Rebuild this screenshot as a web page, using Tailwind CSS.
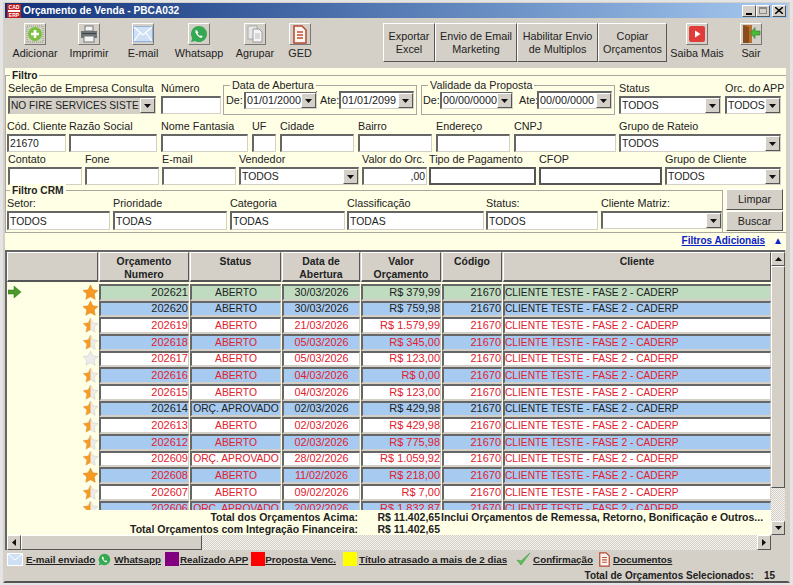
<!DOCTYPE html>
<html lang="pt-BR">
<head>
<meta charset="UTF-8" />
<title>Orçamento de Venda - PBCA032</title>
<script src="https://cdn.jsdelivr.net/npm/@tailwindcss/browser@4"></script>
</head>
<body class="bg-[#e4e4e4] h-[585px] w-[793px] overflow-hidden font-['Liberation_Sans',Arial,sans-serif] text-[10.8px] leading-[13px] text-[#222]">
<div id="app"></div>
<script>
// sunken win32 edges
const SUNKEN = "border-t-2 border-l-2 border-b border-r border-t-[#666] border-l-[#666] border-b-[#d4d0c8] border-r-[#d4d0c8]";
const RAISED = "border border-t-white border-l-white border-b-[#555] border-r-[#555]";

const ARROW_BTN = `<span class="w-[15px] shrink-0 self-stretch bg-[#d4d0c8] ${RAISED} flex items-center justify-center"><svg width="7" height="4" viewBox="0 0 7 4"><path d="M0 0h7L3.5 4z" fill="#111"/></svg></span>`;

function input(w, value = "", extra = "bg-white") {
    return `<div class="${w} h-[18px] ${SUNKEN} ${extra} flex items-center px-px overflow-hidden whitespace-nowrap text-[10.4px]">${value}</div>`;
}
function combo(w, value, bg = "bg-white", size = "text-[10.4px]") {
    return `<div class="${w} h-[18px] ${SUNKEN} ${bg} flex items-center pl-px overflow-hidden whitespace-nowrap ${size}"><span class="grow overflow-hidden">${value}</span>${ARROW_BTN}</div>`;
}
function field(label, ml, control, w) {
    return `<div class="${ml} ${w} shrink-0"><div class="h-[14px] whitespace-nowrap">${label}</div>${control}</div>`;
}
function groupBox(legend, cls, body) {
    return `<div class="relative border border-[#a9a79f] ${cls}"><span class="absolute -top-[7px] left-[6px] bg-[#ffffe6] px-[2px] whitespace-nowrap">${legend}</span>${body}</div>`;
}
function tile(svg) {
    return `<span class="w-[22px] h-[22px] flex items-center justify-center bg-[#d4d0c8] border border-t-white border-l-white border-b-[#777] border-r-[#777]">${svg}</span>`;
}

const ICONS = {
    add: `<svg width="18" height="18" viewBox="0 0 18 18"><rect x="1" y="1" width="16" height="16" fill="none" stroke="#8a9a6a" stroke-dasharray="1 1"/><circle cx="9" cy="9" r="7" fill="#7cc040"/><path d="M9 5v8M5 9h8" stroke="#fff" stroke-width="2.6"/></svg>`,
    print: `<svg width="18" height="18" viewBox="0 0 18 18"><rect x="5" y="1" width="8" height="5" fill="#f4f4f4" stroke="#777"/><rect x="1" y="6" width="16" height="7" fill="#6c7478"/><rect x="2" y="8" width="14" height="1" fill="#3c4246"/><rect x="4" y="11" width="10" height="6" fill="#f4f4f4" stroke="#777"/></svg>`,
    mail: `<svg width="20" height="16" viewBox="0 0 20 16"><rect x="0.5" y="0.5" width="19" height="15" fill="#cfe0f4" stroke="#8fb0d8"/><path d="M1 1l9 8 9-8M1 15l6-8M19 15l-6-8" fill="none" stroke="#fff" stroke-width="1.2"/></svg>`,
    whats: `<svg width="18" height="18" viewBox="0 0 18 18"><path d="M9 1a8 8 0 0 0-6.8 12.2L1 17l3.9-1.1A8 8 0 1 0 9 1z" fill="#35a852"/><path d="M6 5c-1 1-1 2.600 1 5s4 3.400 5 2.500l.8-1.100-2-1.200-.8.800c-1-.4-2-1.500-2.500-2.500l.8-.8-1-2z" fill="#fff"/></svg>`,
    group: `<svg width="18" height="18" viewBox="0 0 18 18"><rect x="2" y="1" width="9" height="13" fill="#e8e8e8" stroke="#aaa"/><path d="M7 4h6l3 3v10H7z" fill="#f6f6f6" stroke="#999"/><path d="M9 9h5M9 11h5M9 13h5" stroke="#bbb"/></svg>`,
    ged: `<svg width="16" height="19" viewBox="0 0 16 19"><path d="M2 1h8l4 4v13H2z" fill="#fdf6f2" stroke="#b4482c" stroke-width="1.500"/><path d="M5 7h6M5 10h6M5 13h6" stroke="#c05030" stroke-width="1.500"/></svg>`,
    video: `<svg width="18" height="18" viewBox="0 0 18 18"><rect x="1" y="1" width="16" height="16" rx="2" fill="#e03c3c"/><path d="M7 5.500v7l5.500-3.500z" fill="#fff"/></svg>`,
    exit: `<svg width="20" height="20" viewBox="0 0 20 20"><path d="M2 1h9v18H2z" fill="#b87030"/><path d="M2 1l6 2v16H2z" fill="#8a4c1c"/><path d="M19 7h-5V3.500L9.500 9l4.500 5.500V11h5z" fill="#4cb83c" stroke="#2c7c20" stroke-width=".6"/></svg>`
};

function toolButton(label, icon, w) {
    return `<div class="${w} shrink-0 flex flex-col items-center">${tile(icon)}<span class="mt-[2px] whitespace-nowrap">${label}</span></div>`;
}
function cmdButton(a, b, w) {
    return `<div class="${w} h-[39px] shrink-0 bg-[#d4d0c8] ${RAISED} flex flex-col items-center justify-center text-center whitespace-nowrap"><span>${a}</span><span>${b}</span></div>`;
}

const STAR = "M7.500 0l2.300 4.800 5.200.7-3.800 3.600 1 5.200-4.700-2.600-4.700 2.600 1-5.200L0 5.500l5.200-.7z";
function star(kind) {
    if (kind === "full") return `<svg width="15" height="15" viewBox="0 0 15 15"><path d="${STAR}" fill="#f59a23" stroke="#d97f10" stroke-width=".5"/></svg>`;
    if (kind === "none") return `<svg width="15" height="15" viewBox="0 0 15 15"><path d="${STAR}" fill="#ececec" stroke="#c8c8c8" stroke-width=".5"/></svg>`;
    return `<svg width="15" height="15" viewBox="0 0 15 15"><path d="${STAR}" fill="#ececec" stroke="#c8c8c8" stroke-width=".5"/><path d="M7.500 0v11.700l-4.700 2.600 1-5.200L0 5.500l5.200-.7z" fill="#f59a23"/></svg>`;
}

const rows = [
    ["202621", "ABERTO", "30/03/2026", "R$ 379,99", "green", "black", "full"],
    ["202620", "ABERTO", "30/03/2026", "R$ 759,98", "blue", "black", "full"],
    ["202619", "ABERTO", "21/03/2026", "R$ 1.579,99", "white", "red", "half"],
    ["202618", "ABERTO", "05/03/2026", "R$ 345,00", "blue", "red", "half"],
    ["202617", "ABERTO", "05/03/2026", "R$ 123,00", "white", "red", "none"],
    ["202616", "ABERTO", "04/03/2026", "R$ 0,00", "blue", "red", "half"],
    ["202615", "ABERTO", "04/03/2026", "R$ 123,00", "white", "red", "half"],
    ["202614", "ORÇ. APROVADO", "02/03/2026", "R$ 429,98", "blue", "black", "half"],
    ["202613", "ABERTO", "02/03/2026", "R$ 429,98", "white", "red", "half"],
    ["202612", "ABERTO", "02/03/2026", "R$ 775,98", "blue", "red", "half"],
    ["202609", "ORÇ. APROVADO", "28/02/2026", "R$ 1.059,92", "white", "red", "half"],
    ["202608", "ABERTO", "11/02/2026", "R$ 218,00", "blue", "red", "full"],
    ["202607", "ABERTO", "09/02/2026", "R$ 7,00", "white", "red", "half"],
    ["202606", "ORÇ. APROVADO", "20/02/2026", "R$ 1.832,87", "blue", "red", "half"]
];
const ROW_BG = { green: "bg-[#c0dcc0]", blue: "bg-[#a6caf0]", white: "bg-white" };
const ROW_TEXT = { black: "text-[#222]", red: "text-[#e0202c]" };
const CELL = "h-full shrink-0 border-t-2 border-l-2 border-b-2 border-r border-t-[#666] border-l-[#666] border-b-[#d4d0c8] border-r-[#d4d0c8] flex items-center overflow-hidden whitespace-nowrap";

function gridRow(r, i) {
    const bg = ROW_BG[r[4]];
    return `<div class="flex gap-px h-[16.67px] shrink-0 text-[11px] ${ROW_TEXT[r[5]]}">
        <div class="w-[91px] h-full flex items-center justify-between shrink-0">
            <span class="pl-[1px]">${i === 0 ? `<svg class="block" width="13" height="12" viewBox="0 0 13 12"><path d="M0 4h6V0l7 6-7 6V8H0z" fill="#4c9a2a" stroke="#2f6e18" stroke-width=".5"/></svg>` : ""}</span>
            <span class="block">${star(r[6])}</span>
        </div>
        <div class="${CELL} ${bg} w-[90px] justify-end">${r[0]}</div>
        <div class="${CELL} ${bg} w-[91px] justify-center text-[10.3px]">${r[1]}</div>
        <div class="${CELL} ${bg} w-[78px] justify-center text-[10.8px]">${r[2]}</div>
        <div class="${CELL} ${bg} w-[80px] justify-end">${r[3]}</div>
        <div class="${CELL} ${bg} w-[60px] justify-end">21670</div>
        <div class="${CELL} ${bg} w-[268px] text-[10.2px]">CLIENTE TESTE - FASE 2 - CADERP</div>
    </div>`;
}

function headCell(a, b, w) {
    return `<div class="${w} h-full shrink-0 bg-[#d4d0c8] ${RAISED} border-b-2 flex flex-col items-center pt-[2px] font-bold text-[10.4px] whitespace-nowrap"><span>${a}</span><span>${b}</span></div>`;
}

function legendLink(text, ml = "") {
    return `<span class="${ml} underline font-bold text-[9.8px] whitespace-nowrap">${text}</span>`;
}
function swatch(color, ml) {
    return `<span class="${ml} ${color} w-[14px] h-[14px] shrink-0"></span>`;
}

document.getElementById("app").innerHTML = `
<div class="ml-[3px] mt-[2px] w-[787px] h-[581px] flex flex-col bg-[#d4d0c8] border-t border-l-2 border-r-2 border-b-2 border-t-[#d4d0c8] border-l-[#d4d0c8] border-r-[#d4d0c8] border-b-[#555]">

    <!-- title bar -->
    <div class="h-[15px] shrink-0 flex items-center bg-linear-to-r from-[#12307a] to-[#a6caf0] text-white font-bold text-[10.2px]">
        <svg class="mx-[2px] shrink-0" width="14" height="14" viewBox="0 0 14 14"><rect width="14" height="14" fill="#c42020"/><rect x="1" y="6" width="12" height="2" fill="#fff"/><text x="7" y="5" font-size="5" text-anchor="middle" fill="#fff" font-family="Liberation Sans">CAD</text><text x="7" y="13" font-size="5" text-anchor="middle" fill="#fff" font-family="Liberation Sans">ERP</text></svg>
        <span class="grow">Orçamento de Venda - PBCA032</span>
        <div class="flex items-center mr-[2px]">
            <span class="w-[14px] h-[12px] bg-[#d4d0c8] ${RAISED} flex items-end justify-center pb-px"><span class="w-[6px] h-[2px] bg-black"></span></span>
            <span class="w-[14px] h-[12px] bg-[#d4d0c8] ${RAISED} flex items-center justify-center"><span class="w-[8px] h-[7px] border border-[#888] border-t-2"></span></span>
            <span class="w-[14px] h-[12px] ml-[2px] bg-[#d4d0c8] ${RAISED} flex items-center justify-center"><svg width="8" height="7" viewBox="0 0 8 7"><path d="M0 0l8 7M8 0L0 7" stroke="#000" stroke-width="1.500"/></svg></span>
        </div>
    </div>

    <!-- toolbar -->
    <div class="h-[50px] shrink-0 flex items-start pl-[3px] pt-[5px]">
        ${toolButton("Adicionar", ICONS.add, "w-[54px]")}
        ${toolButton("Imprimir", ICONS.print, "w-[54px]")}
        ${toolButton("E-mail", ICONS.mail, "w-[54px]")}
        ${toolButton("Whatsapp", ICONS.whats, "w-[58px]")}
        ${toolButton("Agrupar", ICONS.group, "w-[54px]")}
        ${toolButton("GED", ICONS.ged, "w-[36px]")}
        <div class="w-[65px] shrink-0"></div>
        ${cmdButton("Exportar", "Excel", "w-[52px]")}
        ${cmdButton("Envio de Email", "Marketing", "w-[82px]")}
        ${cmdButton("Habilitar Envio", "de Multiplos", "w-[81px]")}
        ${cmdButton("Copiar", "Orçamentos", "w-[69px]")}
        ${toolButton("Saiba Mais", ICONS.video, "w-[60px]")}
        ${toolButton("Sair", ICONS.exit, "w-[48px]")}
    </div>

    <!-- filters -->
    <div class="h-[182px] w-[781px] shrink-0 bg-[#ffffe6] flex flex-col">
        <div class="relative mt-[7px] h-[115px] border-t border-l border-[#a9a79f] shrink-0">
            <span class="absolute -top-[7px] left-[4px] bg-[#ffffe6] px-[2px] font-bold text-[10.2px]">Filtro</span>

            <div class="flex items-start h-[40px] pt-[6px]">
                ${field("Seleção de Empresa Consulta", "ml-[2px]", combo("w-[148px]", "NO FIRE SERVICES SISTE", "bg-[#d4d0c8]", "text-[10.2px]"), "w-[148px]")}
                ${field("Número", "ml-[5px]", input("w-[60px]"), "w-[60px]")}
                ${groupBox("Data de Abertura", "ml-[2px] w-[194px] h-[30px] mt-[3px] flex items-center pl-[2px]",
                    `<span class="w-[18px]">De:</span>${combo("w-[73px]", "01/01/2000", "bg-white", "text-[10.8px]")}<span class="ml-[3px] w-[19px]">Ate:</span>${combo("w-[75px]", "01/01/2099", "bg-white", "text-[10.8px]")}`)}
                ${groupBox("Validade da Proposta", "ml-[4px] w-[194px] h-[30px] mt-[3px] flex items-center pl-[1px]",
                    `<span class="w-[17px]">De:</span>${combo("w-[73px]", "00/00/0000", "bg-white", "text-[10.8px]")}<span class="ml-[6px] w-[18px]">Ate:</span>${combo("w-[75px]", "00/00/0000", "bg-white", "text-[10.8px]")}`)}
                ${field("Status", "ml-[4px]", combo("w-[102px]", "TODOS"), "w-[102px]")}
                ${field("Orc. do APP", "ml-[4px]", combo("w-[56px]", "TODOS"), "w-[56px]")}
            </div>

            <div class="flex items-start h-[33px] mt-[4px]">
                ${field("Cód. Cliente", "ml-[1px]", input("w-[59px]", "21670"), "w-[59px]")}
                ${field("Razão Social", "ml-[3px]", input("w-[88px]"), "w-[88px]")}
                ${field("Nome Fantasia", "ml-[4px]", input("w-[87px]"), "w-[87px]")}
                ${field("UF", "ml-[4px]", input("w-[24px]"), "w-[24px]")}
                ${field("Cidade", "ml-[4px]", input("w-[74px]"), "w-[74px]")}
                ${field("Bairro", "ml-[4px]", input("w-[74px]"), "w-[74px]")}
                ${field("Endereço", "ml-[4px]", input("w-[74px]"), "w-[74px]")}
                ${field("CNPJ", "ml-[4px]", input("w-[102px]"), "w-[102px]")}
                ${field("Grupo de Rateio", "ml-[3px]", combo("w-[162px]", "TODOS"), "w-[162px]")}
            </div>

            <div class="flex items-start h-[32px]">
                ${field("Contato", "ml-[2px]", input("w-[74px]"), "w-[74px]")}
                ${field("Fone", "ml-[3px]", input("w-[74px]"), "w-[74px]")}
                ${field("E-mail", "ml-[3px]", input("w-[74px]"), "w-[74px]")}
                ${field("Vendedor", "ml-[3px]", combo("w-[120px]", "TODOS"), "w-[120px]")}
                ${field("Valor do Orc.", "ml-[3px]", input("w-[65px] justify-end", ",00"), "w-[65px]")}
                ${field("Tipo de Pagamento", "ml-[2px]", `<div class="w-[107px] h-[18px] bg-white border-2 border-[#555]"></div>`, "w-[107px]")}
                ${field("CFOP", "ml-[3px]", `<div class="w-[123px] h-[18px] bg-white border-2 border-[#555]"></div>`, "w-[123px]")}
                ${field("Grupo de Cliente", "ml-[3px]", combo("w-[116px]", "TODOS"), "w-[116px]")}
            </div>
        </div>

        <!-- CRM -->
        <div class="flex h-[43px] shrink-0 border-b border-[#a9a79f]">
            <div class="relative w-[718px] border-t border-l border-r border-[#a9a79f] flex items-start pt-[6px]">
                <span class="absolute -top-[7px] left-[4px] bg-[#ffffe6] px-[2px] font-bold text-[10.2px]">Filtro CRM</span>
                ${field("Setor:", "ml-[1px]", input("w-[103px] h-[19px]", "TODOS"), "w-[103px]")}
                ${field("Prioridade", "ml-[3px]", input("w-[114px] h-[19px]", "TODAS"), "w-[114px]")}
                ${field("Categoria", "ml-[3px]", input("w-[115px] h-[19px]", "TODAS"), "w-[115px]")}
                ${field("Classificação", "ml-[2px]", input("w-[137px] h-[19px]", "TODAS"), "w-[137px]")}
                ${field("Status:", "ml-[2px]", input("w-[112px] h-[19px]", "TODOS"), "w-[112px]")}
                ${field("Cliente Matriz:", "ml-[3px]", combo("w-[121px]", ""), "w-[121px]")}
            </div>
            <div class="ml-[3px] w-[57px] -mt-px flex flex-col gap-px">
                <div class="h-[21px] bg-[#d4d0c8] ${RAISED} flex items-center justify-center">Limpar</div>
                <div class="h-[20px] bg-[#d4d0c8] ${RAISED} flex items-center justify-center">Buscar</div>
            </div>
        </div>

        <div class="flex justify-end items-center pr-[3px] pt-[1px] text-[#0a22c8] font-bold text-[10px]">
            <span class="underline">Filtros Adicionais</span><span class="ml-[8px] text-[10px]">▲</span>
        </div>
    </div>

    <!-- grid -->
    <div class="h-[300px] w-[780px] shrink-0 flex border-t-2 border-l-2 border-t-[#666] border-l-[#666]">
        <div class="w-[764px] shrink-0 flex flex-col">
            <div class="h-[30px] shrink-0 flex gap-px">
                ${headCell("", "", "w-[91px]")}
                ${headCell("Orçamento", "Numero", "w-[90px]")}
                ${headCell("Status", "", "w-[91px]")}
                ${headCell("Data de", "Abertura", "w-[78px]")}
                ${headCell("Valor", "Orçamento", "w-[80px]")}
                ${headCell("Código", "", "w-[60px]")}
                ${headCell("Cliente", "", "w-[268px]")}
            </div>
            <div class="h-[228px] overflow-hidden bg-[#ffffe6] flex flex-col pt-[2px]">
                ${rows.map(gridRow).join("")}
            </div>
            <div class="h-[25px] shrink-0 bg-[#ffffe6] grid grid-cols-[351px_82px_1fr] grid-rows-[13px_11px] pt-px font-bold text-[10.5px] items-center whitespace-nowrap">
                <span class="text-right">Total dos Orçamentos Acima:</span><span class="text-right">R$ 11.402,65</span><span class="pl-px">Inclui Orçamentos de Remessa, Retorno, Bonificação e Outros...</span>
                <span class="text-right">Total Orçamentos com Integração Financeira:</span><span class="text-right">R$ 11.402,65</span><span></span>
            </div>
            <div class="h-[15px] shrink-0 flex bg-[repeating-conic-gradient(#d4d0c8_0_25%,#f4f2ee_0_50%)] bg-[length:2px_2px]">
                <span class="w-[14px] bg-[#d4d0c8] ${RAISED} flex items-center justify-center"><svg width="4" height="7" viewBox="0 0 4 7"><path d="M4 0v7L0 3.500z" fill="#111"/></svg></span>
                <span class="w-[181px] bg-[#d4d0c8] ${RAISED}"></span>
                <span class="grow"></span>
                <span class="w-[14px] bg-[#d4d0c8] ${RAISED} flex items-center justify-center"><svg width="4" height="7" viewBox="0 0 4 7"><path d="M0 0v7l4-3.500z" fill="#111"/></svg></span>
            </div>
        </div>
        <div class="w-[14px] shrink-0 flex flex-col bg-[repeating-conic-gradient(#d4d0c8_0_25%,#f4f2ee_0_50%)] bg-[length:2px_2px]">
            <span class="h-[14px] bg-[#d4d0c8] ${RAISED} flex items-center justify-center"><svg width="7" height="4" viewBox="0 0 7 4"><path d="M0 4h7L3.500 0z" fill="#111"/></svg></span>
            <span class="h-[222px] bg-[#d4d0c8] ${RAISED}"></span>
            <span class="grow"></span>
            <span class="h-[14px] bg-[#d4d0c8] ${RAISED} flex items-center justify-center"><svg width="7" height="4" viewBox="0 0 7 4"><path d="M0 0h7L3.500 4z" fill="#111"/></svg></span>
            <span class="h-[15px] bg-[#d4d0c8]"></span>
        </div>
    </div>

    <!-- legend -->
    <div class="h-[18px] shrink-0 flex items-center pl-[2px]">
        <svg width="16" height="13" viewBox="0 0 16 13"><rect x=".5" y=".5" width="15" height="12" fill="#cfe0f4" stroke="#fff"/><path d="M1 1l7 6 7-6" fill="none" stroke="#fff"/></svg>
        ${legendLink("E-mail enviado", "ml-[3px]")}
        <svg class="ml-[3px]" width="13" height="13" viewBox="0 0 18 18"><path d="M9 1a8 8 0 0 0-6.800 12.200L1 17l3.900-1.100A8 8 0 1 0 9 1z" fill="#35a852"/><path d="M6 5c-1 1-1 2.600 1 5s4 3.400 5 2.500l.8-1.100-2-1.200-.8.800c-1-.4-2-1.500-2.500-2.500l.8-.8-1-2z" fill="#fff"/></svg>
        ${legendLink("Whatsapp", "ml-[3px]")}
        ${swatch("bg-[#800080]", "ml-[4px]")}${legendLink("Realizado APP", "ml-px")}
        ${swatch("bg-[#ff0000]", "ml-[3px]")}${legendLink("Proposta Venc.", "")}
        ${swatch("bg-[#ffff00]", "ml-[7px]")}${legendLink("Título atrasado a mais de 2 dias", "ml-[2px]")}
        <svg class="ml-[9px]" width="15" height="14" viewBox="0 0 15 14"><path d="M1 8l4 5 9-12-9 8z" fill="#5cc05c" stroke="#3c9c3c" stroke-width=".6"/></svg>
        ${legendLink("Confirmação", "ml-[2px]")}
        <svg class="ml-[5px]" width="13" height="15" viewBox="0 0 16 19"><path d="M2 1h8l4 4v13H2z" fill="#fdf6f2" stroke="#b4482c" stroke-width="1.500"/><path d="M5 7h6M5 10h6M5 13h6" stroke="#c05030" stroke-width="1.500"/></svg>
        ${legendLink("Documentos", "ml-[2px]")}
    </div>
    <div class="flex justify-end items-center pr-[13px] pt-px font-bold text-[10px] gap-[10px]">
        <span>Total de Orçamentos Selecionados:</span><span>15</span>
    </div>
</div>`;
</script>
</body>
</html>
